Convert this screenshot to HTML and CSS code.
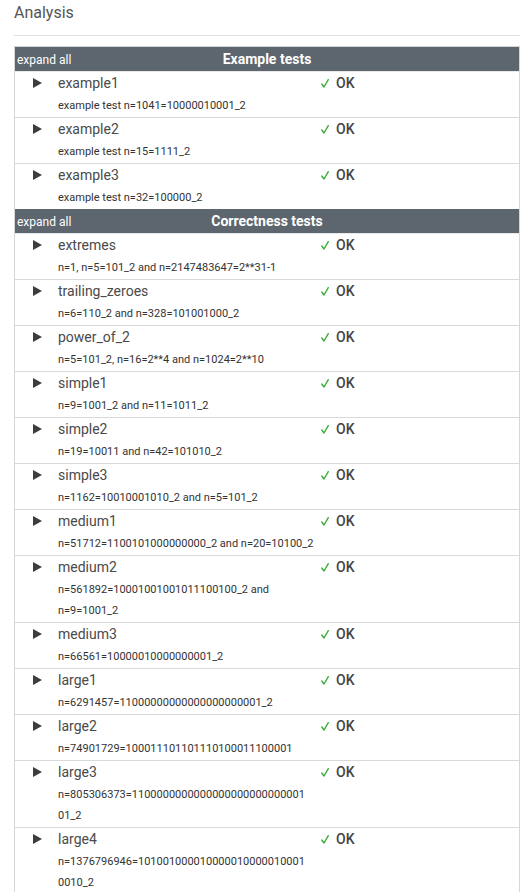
FILE: index.html
```html
<!DOCTYPE html>
<html>
<head>
<meta charset="utf-8">
<link rel="stylesheet" href="styles.css">
</head>
<body>
<div class="page">
  <h2 class="title">Analysis</h2>
  <hr class="rule">
  <div class="tests">
    <div class="group-head"><span class="expand">expand all</span><span class="group-title">Example tests</span></div>
    <div class="row first"><span class="tri"></span><div class="info"><div class="name">example1</div><div class="desc">example test n=1041=10000010001_2</div></div><div class="status"><svg class="check" viewBox="0 0 8 9" width="8" height="9"><polyline points="0.8,5 3,8 7.3,0.6"/></svg>OK</div></div>
    <div class="row"><span class="tri"></span><div class="info"><div class="name">example2</div><div class="desc">example test n=15=1111_2</div></div><div class="status"><svg class="check" viewBox="0 0 8 9" width="8" height="9"><polyline points="0.8,5 3,8 7.3,0.6"/></svg>OK</div></div>
    <div class="row"><span class="tri"></span><div class="info"><div class="name">example3</div><div class="desc">example test n=32=100000_2</div></div><div class="status"><svg class="check" viewBox="0 0 8 9" width="8" height="9"><polyline points="0.8,5 3,8 7.3,0.6"/></svg>OK</div></div>
    <div class="group-head"><span class="expand">expand all</span><span class="group-title">Correctness tests</span></div>
    <div class="row first"><span class="tri"></span><div class="info"><div class="name">extremes</div><div class="desc">n=1, n=5=101_2 and n=2147483647=2**31-1</div></div><div class="status"><svg class="check" viewBox="0 0 8 9" width="8" height="9"><polyline points="0.8,5 3,8 7.3,0.6"/></svg>OK</div></div>
    <div class="row"><span class="tri"></span><div class="info"><div class="name">trailing_zeroes</div><div class="desc">n=6=110_2 and n=328=101001000_2</div></div><div class="status"><svg class="check" viewBox="0 0 8 9" width="8" height="9"><polyline points="0.8,5 3,8 7.3,0.6"/></svg>OK</div></div>
    <div class="row"><span class="tri"></span><div class="info"><div class="name">power_of_2</div><div class="desc">n=5=101_2, n=16=2**4 and n=1024=2**10</div></div><div class="status"><svg class="check" viewBox="0 0 8 9" width="8" height="9"><polyline points="0.8,5 3,8 7.3,0.6"/></svg>OK</div></div>
    <div class="row"><span class="tri"></span><div class="info"><div class="name">simple1</div><div class="desc">n=9=1001_2 and n=11=1011_2</div></div><div class="status"><svg class="check" viewBox="0 0 8 9" width="8" height="9"><polyline points="0.8,5 3,8 7.3,0.6"/></svg>OK</div></div>
    <div class="row"><span class="tri"></span><div class="info"><div class="name">simple2</div><div class="desc">n=19=10011 and n=42=101010_2</div></div><div class="status"><svg class="check" viewBox="0 0 8 9" width="8" height="9"><polyline points="0.8,5 3,8 7.3,0.6"/></svg>OK</div></div>
    <div class="row"><span class="tri"></span><div class="info"><div class="name">simple3</div><div class="desc">n=1162=10010001010_2 and n=5=101_2</div></div><div class="status"><svg class="check" viewBox="0 0 8 9" width="8" height="9"><polyline points="0.8,5 3,8 7.3,0.6"/></svg>OK</div></div>
    <div class="row"><span class="tri"></span><div class="info"><div class="name">medium1</div><div class="desc">n=51712=1100101000000000_2 and n=20=10100_2</div></div><div class="status"><svg class="check" viewBox="0 0 8 9" width="8" height="9"><polyline points="0.8,5 3,8 7.3,0.6"/></svg>OK</div></div>
    <div class="row"><span class="tri"></span><div class="info"><div class="name">medium2</div><div class="desc">n=561892=10001001001011100100_2 and n=9=1001_2</div></div><div class="status"><svg class="check" viewBox="0 0 8 9" width="8" height="9"><polyline points="0.8,5 3,8 7.3,0.6"/></svg>OK</div></div>
    <div class="row"><span class="tri"></span><div class="info"><div class="name">medium3</div><div class="desc">n=66561=10000010000000001_2</div></div><div class="status"><svg class="check" viewBox="0 0 8 9" width="8" height="9"><polyline points="0.8,5 3,8 7.3,0.6"/></svg>OK</div></div>
    <div class="row"><span class="tri"></span><div class="info"><div class="name">large1</div><div class="desc">n=6291457=11000000000000000000001_2</div></div><div class="status"><svg class="check" viewBox="0 0 8 9" width="8" height="9"><polyline points="0.8,5 3,8 7.3,0.6"/></svg>OK</div></div>
    <div class="row"><span class="tri"></span><div class="info"><div class="name">large2</div><div class="desc">n=74901729=100011101101110100011100001</div></div><div class="status"><svg class="check" viewBox="0 0 8 9" width="8" height="9"><polyline points="0.8,5 3,8 7.3,0.6"/></svg>OK</div></div>
    <div class="row"><span class="tri"></span><div class="info"><div class="name">large3</div><div class="desc">n=805306373=1100000000000000000000000001<wbr>01_2</div></div><div class="status"><svg class="check" viewBox="0 0 8 9" width="8" height="9"><polyline points="0.8,5 3,8 7.3,0.6"/></svg>OK</div></div>
    <div class="row"><span class="tri"></span><div class="info"><div class="name">large4</div><div class="desc">n=1376796946=101001000010000010000010001<wbr>0010_2</div></div><div class="status"><svg class="check" viewBox="0 0 8 9" width="8" height="9"><polyline points="0.8,5 3,8 7.3,0.6"/></svg>OK</div></div>
  </div>
</div>
</body>
</html>
```
FILE: styles.css
```css
* { box-sizing: border-box; }
html, body { margin: 0; padding: 0; background: #fff; }
body { font-family: Roboto, "Liberation Sans", sans-serif; color: #444; }
.page { padding: 0 12px 0 14px; }
.title { margin: 0; padding-top: 3px; font-size: 16px; line-height: 20px; font-weight: 400; color: #555; }
.rule { margin: 12px 0 10px; border: 0; border-top: 1px solid #e2e2e2; height: 0; }
.tests { border: 1px solid #d6d6d6; border-bottom: 0; }
.group-head { position: relative; display: flex; align-items: center; justify-content: center; height: 24px; background: #5d656e; color: #fff; }
.expand { position: absolute; left: 2px; top: 5px; font-size: 12px; line-height: 16px; }
.group-title { font-size: 14px; font-weight: 700; line-height: 20px; }
.row { display: grid; grid-template-columns: 43px 258px 1fr; border-top: 1px solid #d9d9d9; padding: 2px 0 1px; min-height: 46px; }
.row.first { border-top: 1px solid #e8e8e8; }
.tri { margin: 4px 0 0 18px; width: 0; height: 0; border-style: solid; border-width: 5px 0 5px 9px; border-color: transparent transparent transparent #3d3d3d; }
.info { min-width: 0; }
.name { font-size: 14px; line-height: 18px; color: #4a4a4a; }
.desc { margin-top: 3px; font-size: 11px; line-height: 21px; color: #333; overflow-wrap: anywhere; }
.status { grid-column: 3; padding-left: 5px; font-size: 14px; line-height: 18px; font-weight: 500; color: #444; display: flex; align-items: flex-start; }
.check { margin: 5px 7px 0 0; flex: none; }
.check polyline { fill: none; stroke: #3aad3a; stroke-width: 1.4; stroke-linecap: round; stroke-linejoin: round; }
```
